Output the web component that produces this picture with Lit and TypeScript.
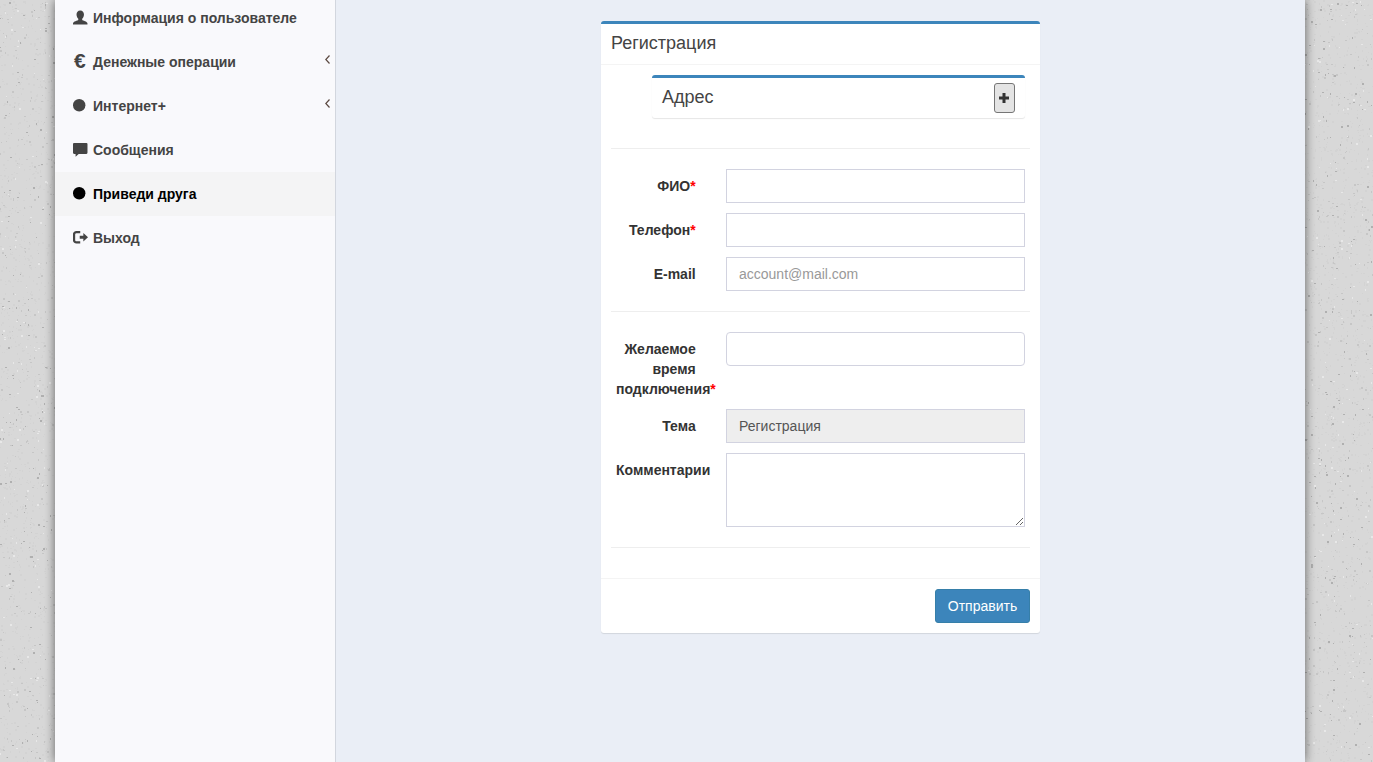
import { LitElement, html, css, svg } from "lit";
import { customElement } from "lit/decorators.js";

function speckle(x0: number, x1: number, h: number, count: number, seed: number) {
  let s = seed;
  const rnd = () => {
    s = (s + 0x6d2b79f5) | 0;
    let t = Math.imul(s ^ (s >>> 15), 1 | s);
    t = (t + Math.imul(t ^ (t >>> 7), 61 | t)) ^ t;
    return ((t ^ (t >>> 14)) >>> 0) / 4294967296;
  };
  let d = "";
  for (let i = 0; i < count; i++) {
    const x = x0 + Math.floor(rnd() * (x1 - x0));
    const y = Math.floor(rnd() * h);
    const w = rnd() < 0.45 ? 2 : 1;
    const t = rnd() < 0.45 ? 2 : 1;
    d += `M${x} ${y}h${w}v${t}h-${w}z`;
  }
  return d;
}

const DARK = speckle(0, 55, 762, 130, 7) + speckle(1305, 1373, 762, 160, 11);
const MID = speckle(0, 55, 762, 260, 23) + speckle(1305, 1373, 762, 320, 31);
const LIGHT = speckle(0, 55, 762, 110, 47) + speckle(1305, 1373, 762, 130, 59);
const FAINT = speckle(0, 55, 762, 1100, 71) + speckle(1305, 1373, 762, 1350, 83);

const icons = {
  user: svg`<path d="M7 .5c2.300 0 3.600 1.700 3.600 3.900 0 1.800-.8 3.300-1.700 4v1.300c.4.6 5.100 1.300 5.100 3.400V14H0v-.9c0-2.100 4.700-2.800 5.100-3.400V8.400C4.200 7.700 3.400 6.200 3.400 4.400 3.400 2.200 4.700.5 7 .5z"/>`,
  circle: svg`<circle cx="6" cy="7" r="6"/>`,
  chat: svg`<path d="M1 1h12a1 1 0 0 1 1 1v8.500a1 1 0 0 1-1 1H5.500L2.500 14.200V11.500H1a1 1 0 0 1-1-1V2a1 1 0 0 1 1-1z"/>`,
  out: svg`<path d="M7 2H3.300A2.300 2.300 0 0 0 1 4.300v5.400A2.300 2.300 0 0 0 3.300 12H7" fill="none" stroke="currentColor" stroke-width="2.200"/><path d="M6.500 5.500H10V3l4.500 4L10 11V8.500H6.500z"/>`,
};

interface Item {
  label: string;
  icon?: keyof typeof icons;
  euro?: boolean;
  chevron?: boolean;
  active?: boolean;
}

const ITEMS: Item[] = [
  { label: "Информация о пользователе", icon: "user" },
  { label: "Денежные операции", euro: true, chevron: true },
  { label: "Интернет+", icon: "circle", chevron: true },
  { label: "Сообщения", icon: "chat" },
  { label: "Приведи друга", icon: "circle", active: true },
  { label: "Выход", icon: "out" },
];

@customElement("app-root")
export class AppRoot extends LitElement {
  static styles = css`
    :host {
      display: block;
      position: relative;
      height: 762px;
      overflow: hidden;
      background: #d8d8d8;
      font-family: "Liberation Sans", Arial, sans-serif;
      font-size: 14px;
      color: #333;
    }
    .noise {
      position: absolute;
      inset: 0;
    }
    .frame {
      position: relative;
      display: flex;
      width: 1250px;
      height: 762px;
      margin-left: 55px;
      box-shadow: 0 0 10px rgba(0, 0, 0, 0.55);
    }
    .side {
      width: 280px;
      flex: none;
      background: #f9f9fc;
      border-right: 1px solid #d2d6de;
    }
    .menu {
      margin-top: -4px;
    }
    .item {
      display: flex;
      align-items: center;
      height: 44px;
      padding-left: 18px;
      font-weight: bold;
      color: #444;
      white-space: nowrap;
    }
    .item.active {
      background: #f4f4f5;
      color: #000;
    }
    .ic {
      width: 20px;
      flex: none;
      display: flex;
      align-items: center;
    }
    .ic svg {
      display: block;
      fill: currentColor;
      margin-top: -2px;
    }
    .euro {
      font-family: "Liberation Sans", sans-serif;
      font-weight: bold;
      font-size: 21px;
      line-height: 21px;
      margin-left: 1px;
      margin-top: -3px;
    }
    .label {
      flex: 1;
    }
    .chev {
      margin-right: 5px;
      margin-top: -6px;
      fill: none;
      stroke: #5c4a42;
      stroke-width: 1.2;
    }
    .main {
      flex: 1;
      background: #eaeef6;
      padding: 21px 0 0 265px;
    }
    .card {
      box-sizing: border-box;
      width: 439px;
      height: 612px;
      background: #fff;
      border-top: 3px solid #3c85bb;
      border-radius: 3px;
      box-shadow: 0 1px 1px rgba(0, 0, 0, 0.1);
      display: flex;
      flex-direction: column;
    }
    .head {
      padding: 0 10px 2px;
      height: 38px;
      display: flex;
      align-items: center;
      font-size: 18px;
      line-height: 20px;
      color: #444;
      border-bottom: 1px solid #f4f4f4;
    }
    .body {
      flex: 1;
      padding: 10px 10px 0;
    }
    .sub {
      box-sizing: border-box;
      margin-left: 41px;
      width: 373px;
      height: 43px;
      border-top: 3px solid #3c85bb;
      border-radius: 3px;
      box-shadow: 0 1px 1px rgba(0, 0, 0, 0.1);
      padding: 5px 10px 0;
      display: flex;
      align-items: flex-start;
      justify-content: space-between;
      font-size: 18px;
      color: #444;
    }
    .sub span {
      line-height: 28px;
    }
    .plus {
      box-sizing: border-box;
      width: 21px;
      height: 30px;
      border: 1px solid #767676;
      border-radius: 3px;
      background: #e4e4e4;
      display: flex;
      align-items: center;
      padding: 0 0 0 4px;
    }
    hr {
      border: 0;
      border-top: 1px solid #eee;
      margin: 0;
    }
    .h1 {
      margin-top: 30px;
      margin-bottom: 20px;
    }
    .h2 {
      margin-top: 20px;
      margin-bottom: 20px;
    }
    .row {
      display: flex;
      margin-bottom: 10px;
      padding: 0 5px;
    }
    .row:last-of-type {
      margin-bottom: 0;
    }
    .lab {
      width: 79.700px;
      flex: none;
      margin-right: 30.300px;
      padding-top: 7px;
      text-align: right;
      font-weight: bold;
      line-height: 20px;
      color: #333;
    }
    .req {
      color: #f00;
    }
    input,
    textarea {
      box-sizing: border-box;
      display: block;
      width: 299px;
      height: 34px;
      padding: 6px 12px;
      border: 1px solid #d2d3e0;
      border-radius: 0;
      font: 14px "Liberation Sans", Arial, sans-serif;
      color: #555;
      background: #fff;
      outline: none;
    }
    input::placeholder {
      color: #999;
    }
    input.round {
      border-radius: 4px;
    }
    input[disabled] {
      background: #eee;
    }
    textarea {
      height: 74px;
    }
    .foot {
      height: 55px;
      box-sizing: border-box;
      border-top: 1px solid #f4f4f4;
      padding: 10px 10px 0;
      display: flex;
      justify-content: flex-end;
    }
    .send {
      box-sizing: border-box;
      width: 95px;
      height: 34px;
      border: 1px solid #367fa9;
      border-radius: 3px;
      background: #3c85bb;
      color: #fff;
      font: 14px "Liberation Sans", Arial, sans-serif;
      padding: 0;
    }
  `;

  private renderItem(it: Item) {
    return html`<div class="item ${it.active ? "active" : ""}">
      <span class="ic">
        ${it.euro
          ? html`<span class="euro">€</span>`
          : html`<svg width="15" height="15" viewBox="0 0 14.500 14.500">${icons[it.icon!]}</svg>`}
      </span>
      <span class="label">${it.label}</span>
      ${it.chevron
        ? html`<svg class="chev" width="5" height="9" viewBox="0 0 5 9"><path d="M4.500 .5 .8 4.500l3.700 4"/></svg>`
        : ""}
    </div>`;
  }

  render() {
    return html`
      <svg class="noise" width="1373" height="762" aria-hidden="true">
        <path d=${FAINT} fill="#d3d3d3" />
        <path d=${MID} fill="#c6c6c6" />
        <path d=${DARK} fill="#b0b0b0" />
        <path d=${LIGHT} fill="#e8e8e8" />
      </svg>
      <div class="frame">
        <aside class="side">
          <div class="menu">${ITEMS.map((i) => this.renderItem(i))}</div>
        </aside>
        <main class="main">
          <section class="card">
            <div class="head">Регистрация</div>
            <div class="body">
              <div class="sub">
                <span>Адрес</span>
                <button class="plus" aria-label="Развернуть">
                  <svg width="10" height="10" viewBox="0 0 10 10"><path d="M3.500 0h3v3.500H10v3H6.500V10h-3V6.500H0v-3h3.500z" fill="#333" /></svg>
                </button>
              </div>
              <hr class="h1" />
              <div class="row"><div class="lab">ФИО<span class="req">*</span></div><input /></div>
              <div class="row"><div class="lab">Телефон<span class="req">*</span></div><input /></div>
              <div class="row"><div class="lab">E-mail</div><input placeholder="account@mail.com" /></div>
              <hr class="h2" />
              <div class="row">
                <div class="lab">Желаемое время подключения<span class="req">*</span></div>
                <input class="round" />
              </div>
              <div class="row"><div class="lab">Тема</div><input disabled value="Регистрация" /></div>
              <div class="row"><div class="lab">Комментарии</div><textarea></textarea></div>
              <hr class="h2" />
            </div>
            <div class="foot"><button class="send">Отправить</button></div>
          </section>
        </main>
      </div>
    `;
  }
}
